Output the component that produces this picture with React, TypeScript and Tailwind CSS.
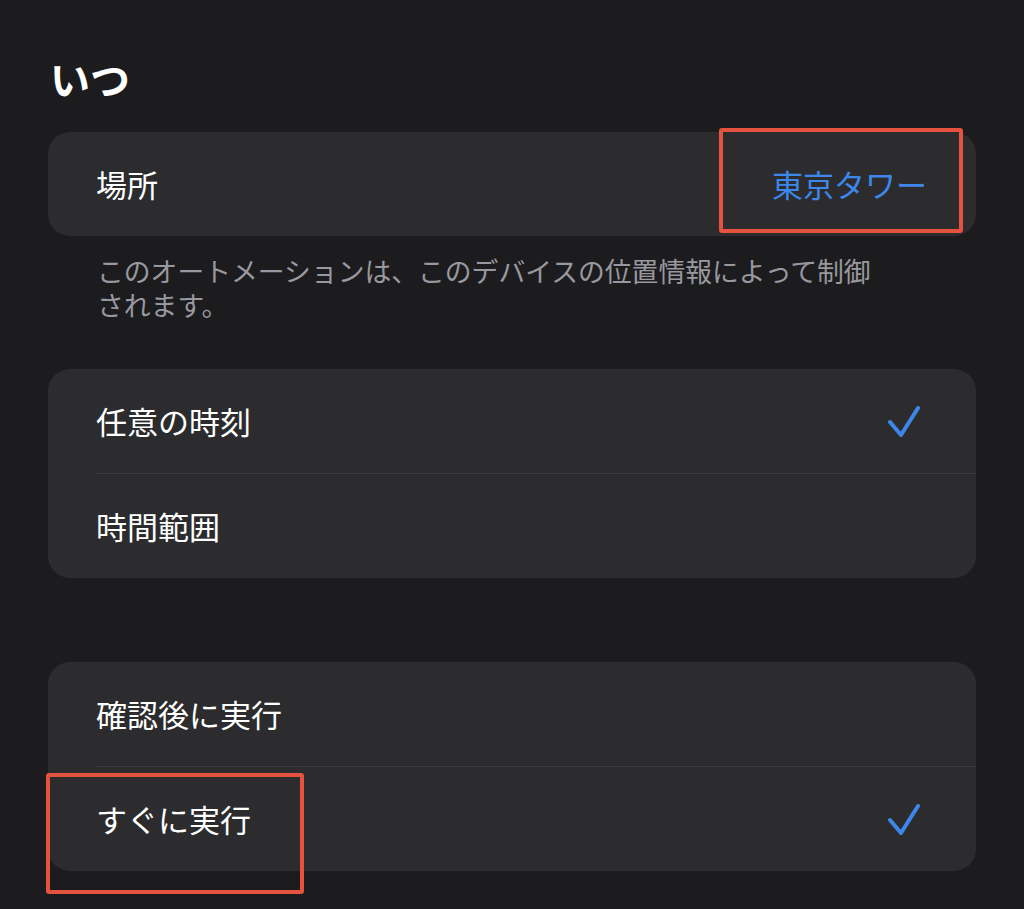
import React from "react";

const font = { fontFamily: '"Noto Sans CJK JP", "Noto Sans", sans-serif' };

const Check = () => (
  <svg width="32" height="32" viewBox="0 0 32 32" fill="none">
    <path
      d="M2 17 L13 30 L30 3"
      stroke="#3d87ea"
      strokeWidth="4"
      strokeLinecap="round"
      strokeLinejoin="round"
    />
  </svg>
);

const Row = ({
  label,
  checked,
  divider,
}: {
  label: string;
  checked?: boolean;
  divider?: boolean;
}) => (
  <div className="flex flex-col">
    <div className="flex h-[104px] items-center justify-between pl-12 pr-[56px]">
      <span className="text-[31px] text-white">{label}</span>
      {checked && <Check />}
    </div>
    {divider && <div className="ml-12 h-px bg-[#3d3d41]" />}
  </div>
);

const App = () => {
  return (
    <div
      className="relative min-h-[909px] w-full overflow-hidden bg-[#1c1c1e] px-12 pt-[54px]"
      style={font}
    >
      <h1 className="h-[48px] pl-[2px] text-[40px] font-bold leading-[48px] text-white">
        いつ
      </h1>

      <div className="mt-[30px] flex h-[104px] items-center justify-between rounded-[22px] bg-[#2c2c2e] pl-12 pr-[49px]">
        <span className="text-[31px] text-white">場所</span>
        <span className="text-[31px] text-[#3d87ea]">東京タワー</span>
      </div>

      <p className="mt-[18px] pl-[49px] pr-[60px] text-[26.8px] leading-[34px] text-[#98989e]">
        このオートメーションは、このデバイスの位置情報によって制御
        <br />
        されます。
      </p>

      <div className="mt-[47px] overflow-hidden rounded-[22px] bg-[#2c2c2e]">
        <Row label="任意の時刻" checked divider />
        <Row label="時間範囲" />
      </div>

      <div className="mt-[84px] overflow-hidden rounded-[22px] bg-[#2c2c2e]">
        <Row label="確認後に実行" divider />
        <Row label="すぐに実行" checked />
      </div>

      {/* annotation boxes */}
      <div className="absolute left-[719px] top-[128px] h-[105px] w-[244px] rounded-[3px] border-4 border-[#e5533f]" />
      <div className="absolute left-[46px] top-[773px] h-[121px] w-[258px] rounded-[3px] border-4 border-[#e5533f]" />
    </div>
  );
};

export default App;
